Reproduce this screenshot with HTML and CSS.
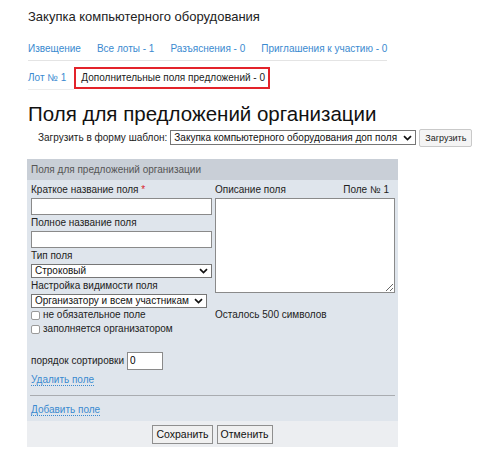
FILE: index.html
```html
<!DOCTYPE html>
<html lang="ru">
<head>
<meta charset="utf-8">
<title>Поля для предложений организации</title>
<link rel="stylesheet" href="styles.css">
</head>
<body>
<div class="page">
  <div class="title">Закупка компьютерного оборудования</div>
  <div class="tabs tabs-main">
    <a class="tab" href="#">Извещение</a>
    <a class="tab" href="#">Все лоты - 1</a>
    <a class="tab" href="#">Разъяснения - 0</a>
    <a class="tab" href="#">Приглашения к участию - 0</a>
  </div>
  <div class="tabs tabs-sub">
    <a class="tab tab-lot" href="#">Лот № 1</a>
    <span class="tab-active">Дополнительные поля предложений - 0</span>
  </div>
  <h1 class="heading">Поля для предложений организации</h1>
  <div class="template-row">
    <span class="template-label">Загрузить в форму шаблон:</span>
    <select class="sel template-select">
      <option>Закупка компьютерного оборудования доп поля</option>
    </select>
    <button class="btn-load" type="button">Загрузить</button>
  </div>

  <div class="panel">
    <div class="panel-head">Поля для предложений организации</div>
    <div class="panel-body">
      <div class="fields">
        <div class="col-left">
          <div class="label">Краткое название поля <span class="req">*</span></div>
          <input class="text-input" type="text">
          <div class="label">Полное название поля</div>
          <input class="text-input" type="text">
          <div class="label">Тип поля</div>
          <select class="sel field-sel sel-full"><option>Строковый</option></select>
          <div class="label">Настройка видимости поля</div>
          <select class="sel field-sel sel-vis"><option>Организатору и всем участникам</option></select>
          <label class="check-row"><input type="checkbox" class="check"> не обязательное поле</label>
          <label class="check-row"><input type="checkbox" class="check"> заполняется организатором</label>
          <div class="sort-row">
            <span>порядок сортировки</span>
            <input class="sort-input" type="text" value="0">
          </div>
          <div class="link-row"><a class="dotted-link" href="#">Удалить поле</a></div>
        </div>
        <div class="col-right">
          <div class="label label-split"><span>Описание поля</span><span>Поле № 1</span></div>
          <textarea class="desc"></textarea>
          <div class="remain">Осталось 500 символов</div>
        </div>
      </div>
      <div class="divider"></div>
      <div class="link-row add-row"><a class="dotted-link" href="#">Добавить поле</a></div>
    </div>
    <div class="panel-foot">
      <button class="btn" type="button">Сохранить</button>
      <button class="btn" type="button">Отменить</button>
    </div>
  </div>
</div>
</body>
</html>
```

FILE: styles.css
```css
html, body {
  margin: 0;
  padding: 0;
  background: #ffffff;
}

body {
  font-family: "Liberation Sans", Arial, sans-serif;
  color: #222222;
}

.page {
  padding-left: 28px;
}

.title {
  padding-top: 8px;
  height: 26px;
  line-height: 18px;
  font-size: 13px;
  color: #222222;
}

.tabs {
  display: flex;
  width: fit-content;
  font-size: 10px;
}

.tab {
  color: #3a8ad0;
  text-decoration: none;
}

.tabs-main {
  margin-top: 3px;
  height: 23px;
  line-height: 23px;
  gap: 16px;
  border-bottom: 1px solid #e4e4e4;
}

.tabs-sub {
  margin-top: 6px;
  height: 23px;
  align-items: stretch;
}

.tab-lot {
  line-height: 22px;
  padding-right: 8px;
  border-bottom: 1px solid #ececec;
}

.tab-active {
  box-sizing: border-box;
  height: 22px;
  line-height: 18px;
  padding: 0 3px 0 5px;
  border: 2px solid #e3232a;
  color: #222222;
}

.heading {
  margin: 10px 0 0 0;
  font-size: 20.5px;
  line-height: 28px;
  font-weight: normal;
  color: #111111;
}

.template-row {
  display: flex;
  align-items: center;
  padding-left: 10px;
  height: 19px;
  font-size: 10px;
}

.template-label {
  margin-right: 3px;
}

.sel {
  -webkit-appearance: none;
  appearance: none;
  box-sizing: border-box;
  margin: 0;
  padding: 0 14px 0 3px;
  border: 1px solid #767676;
  border-radius: 0;
  color: #111111;
  font-family: "Liberation Sans", Arial, sans-serif;
  font-size: 10px;
  line-height: 12px;
  background-color: #ffffff;
  background-image: url("data:image/svg+xml;utf8,<svg xmlns='http://www.w3.org/2000/svg' width='9' height='6' viewBox='0 0 9 6'><path d='M1 1.2l3.5 3.4L8 1.2' fill='none' stroke='%23111111' stroke-width='1.7'/></svg>");
  background-repeat: no-repeat;
  background-position: right 3px center;
  background-size: 9px 6px;
}

.template-select {
  height: 15px;
  width: 246px;
}

.btn-load {
  box-sizing: border-box;
  margin-left: 3px;
  height: 18px;
  width: 53px;
  padding: 0;
  font-family: "Liberation Sans", Arial, sans-serif;
  font-size: 9px;
  color: #222222;
  background: #f4f4f4;
  border: 1px solid #c9c9c9;
  border-radius: 2px;
}

.panel {
  margin-top: 12px;
  margin-left: -1px;
  width: 371px;
}

.panel-head {
  height: 21px;
  line-height: 21px;
  padding-left: 4px;
  font-size: 10px;
  color: #555555;
  background: #c9cfd7;
}

.panel-body {
  background: #dfe5ec;
  padding: 2px 3px 4px 4px;
  font-size: 10px;
}

.fields {
  display: grid;
  grid-template-columns: 181px 180px;
  column-gap: 3px;
  align-items: start;
}

.col-left, .col-right {
  display: flex;
  flex-direction: column;
}

.label {
  line-height: 15px;
  height: 15px;
}

.req {
  color: #d8232a;
}

.label-split {
  display: flex;
  justify-content: space-between;
  padding-right: 6px;
}

.text-input {
  box-sizing: border-box;
  height: 17px;
  width: 181px;
  margin: 1px 0 0 0;
  padding: 0 2px;
  border: 1px solid #8a8a8a;
  border-radius: 0;
  background: #ffffff;
  font-family: "Liberation Sans", Arial, sans-serif;
  font-size: 10px;
}

.field-sel {
  height: 14px;
  margin-top: 1px;
  align-self: flex-start;
}

.sel-full {
  width: 181px;
}

.sel-vis {
  width: 176px;
}

.check-row {
  display: flex;
  align-items: center;
  height: 14px;
  line-height: 14px;
}

.check {
  -webkit-appearance: none;
  appearance: none;
  box-sizing: border-box;
  width: 9px;
  height: 9px;
  margin: 0 3px 0 0;
  border: 1px solid #9a9a9a;
  border-radius: 2px;
  background: #ffffff;
}

.sort-row {
  display: flex;
  align-items: center;
  margin-top: 16px;
  height: 17px;
}

.sort-row span {
  margin-right: 3px;
}

.sort-input {
  box-sizing: border-box;
  width: 36px;
  height: 18px;
  padding: 0 2px;
  margin: 0;
  border: 1px solid #8a8a8a;
  border-radius: 0;
  background: #ffffff;
  font-family: "Liberation Sans", Arial, sans-serif;
  font-size: 10px;
}

.link-row {
  margin-top: 4px;
  line-height: 14px;
  height: 14px;
}

.dotted-link {
  color: #3a8ad0;
  text-decoration: none;
  border-bottom: 1px dotted #3a8ad0;
}

.desc {
  box-sizing: border-box;
  display: block;
  margin: 1px 0 0 0;
  width: 180px;
  height: 95px;
  padding: 2px;
  border: 1px solid #8a8a8a;
  border-radius: 0;
  background: #ffffff;
  font-family: "Liberation Sans", Arial, sans-serif;
  font-size: 10px;
}

.remain {
  margin-top: 15px;
  line-height: 14px;
}

.divider {
  margin: 8px 0 0 -1px;
  border-top: 1px solid #a9acb0;
}

.add-row {
  margin-top: 7px;
}

.panel-foot {
  display: flex;
  justify-content: center;
  align-items: center;
  gap: 4px;
  height: 26px;
  background: #eceef1;
}

.btn {
  box-sizing: border-box;
  height: 19px;
  padding: 0 3px;
  font-family: "Liberation Sans", Arial, sans-serif;
  font-size: 10.5px;
  color: #111111;
  background: #f0f0f0;
  border: 1px solid #8f8f8f;
  border-radius: 0;
}
```
